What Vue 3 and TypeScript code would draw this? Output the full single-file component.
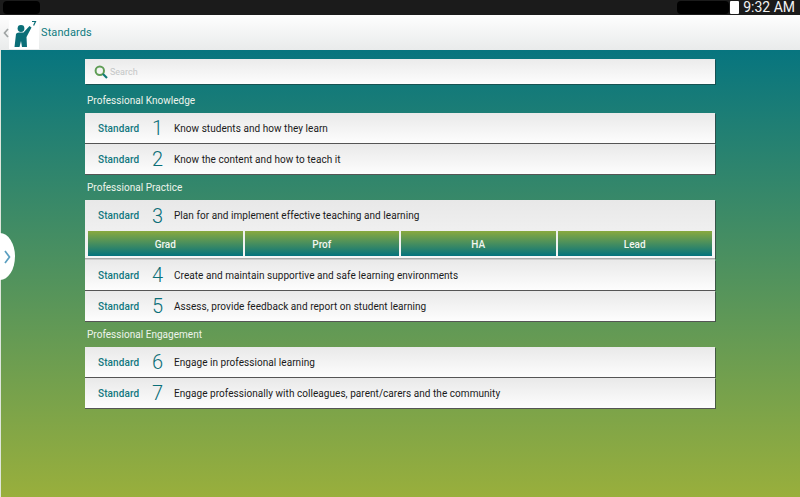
<script setup lang="ts">
interface Row { n: number; text: string; levels?: string[] }
interface Group { title: string; rows: Row[] }
const groups: Group[] = [
  { title: 'Professional Knowledge', rows: [
    { n: 1, text: 'Know students and how they learn' },
    { n: 2, text: 'Know the content and how to teach it' },
  ] },
  { title: 'Professional Practice', rows: [
    { n: 3, text: 'Plan for and implement effective teaching and learning', levels: ['Grad', 'Prof', 'HA', 'Lead'] },
    { n: 4, text: 'Create and maintain supportive and safe learning environments' },
    { n: 5, text: 'Assess, provide feedback and report on student learning' },
  ] },
  { title: 'Professional Engagement', rows: [
    { n: 6, text: 'Engage in professional learning' },
    { n: 7, text: 'Engage professionally with colleagues, parent/carers and the community' },
  ] },
]
</script>

<template>
  <div class="screen">
    <div class="status">
      <span class="blot left"></span>
      <span class="spacer"></span>
      <span class="blot right"></span>
      <span class="battery"></span>
      <span class="clock">9:32 AM</span>
    </div>
    <header class="bar">
      <svg class="back" width="6" height="10" viewBox="0 0 6 10"><path d="M5 1 L1.5 5 L5 9" fill="none" stroke="#a0a5a5" stroke-width="1.7"/></svg>
      <div class="logo">
        <svg width="30" height="29" viewBox="0 1 30 29">
          <circle cx="12" cy="9.5" r="3.4" fill="#0b6f78"/>
          <path d="M5.5 28 L7 15 Q7.5 13.5 10 13.5 L14.5 13.5 L20.5 7 L22.5 8.5 L17.5 18 L18 28 L13 28 L12 22 L10.5 28 Z" fill="#0b6f78"/>
          <path d="M23 2.5 H26.5 L24.6 6.5" fill="none" stroke="#0b6f78" stroke-width="1.2"/>
        </svg>
      </div>
      <span class="title">Standards</span>
    </header>
    <main class="body">
      <button class="tab" type="button">
        <svg width="7" height="14" viewBox="0 0 7 14"><path d="M1 1 L5.5 7 L1 13" fill="none" stroke="#5b9fc0" stroke-width="1.7"/></svg>
      </button>
      <div class="column">
        <div class="search">
          <svg width="14" height="14" viewBox="0 0 14 14">
            <circle cx="5.8" cy="5.8" r="4.2" fill="none" stroke="#5f9d55" stroke-width="2"/>
            <path d="M9 9 L13 13" stroke="#0f7a78" stroke-width="2.2"/>
          </svg>
          <span>Search</span>
        </div>
        <section v-for="g in groups" :key="g.title" class="group">
          <h2>{{ g.title }}</h2>
          <div class="list">
            <div v-for="r in g.rows" :key="r.n" class="card" :class="{ open: r.levels }">
              <div class="row">
                <span class="std">Standard</span>
                <span class="num">{{ r.n }}</span>
                <span class="text">{{ r.text }}</span>
              </div>
              <div v-if="r.levels" class="levels">
                <span v-for="l in r.levels" :key="l">{{ l }}</span>
              </div>
            </div>
          </div>
        </section>
      </div>
    </main>
  </div>
</template>

<style>
html, body { margin: 0; padding: 0; background: #fff; }
</style>

<style scoped>
.screen { width: 800px; height: 497px; display: flex; flex-direction: column; overflow: hidden; font-family: Roboto, "Liberation Sans", sans-serif; }
.status { height: 15px; background: #1b1b1b; display: flex; align-items: center; color: #f2f2f2; flex: none; }
.blot { background: #000; height: 13px; border-radius: 4px; }
.blot.left { width: 37px; margin-left: 3px; }
.blot.right { width: 52px; }
.spacer { flex: 1; }
.battery { width: 9px; height: 13px; background: #fff; margin-left: 1px; border-radius: 1px; }
.clock { font-size: 14px; margin: 0 5px 0 4px; line-height: 15px; }
.bar { height: 35px; flex: none; display: flex; align-items: center; background: linear-gradient(#fefefe, #e9ebeb); box-sizing: border-box; }
.back { margin-left: 3px; }
.logo { width: 30px; height: 29px; background: #fff; margin-top: 3px; line-height: 0; }
.title { color: #0f7b80; font-size: 11px; margin-left: 2px; letter-spacing: .1px; }
.body { flex: 1; position: relative; background: linear-gradient(#07757f, #99af3c); border-left: 1px solid #dfe6dc; display: flex; justify-content: center; }
.column { width: 630px; margin-left: -1px; padding-top: 9px; }
.tab { position: absolute; left: -1px; top: 183px; width: 15px; height: 47px; padding: 0; border: 0; background: #fff; border-radius: 0 100% 100% 0 / 0 50% 50% 0; display: flex; align-items: center; justify-content: center; }
.search { height: 25px; box-sizing: border-box; display: flex; align-items: center; gap: 2px; padding-left: 9px; background: linear-gradient(#ebebeb, #fdfdfd); box-shadow: 1px 1px 0 rgba(30, 50, 50, .55); font-size: 9px; color: #c4c6c6; }
.group h2 { margin: 0; font-size: 10px; font-weight: 400; color: #eef4ec; height: 25px; box-sizing: border-box; line-height: 13px; padding: 6px 0 0 2px; letter-spacing: .03px; }
.search + .group h2 { height: 29px; padding-top: 10px; }
.list { display: flex; flex-direction: column; }
.card { background: linear-gradient(#e9e9e9, #fdfdfd); box-shadow: 0 1px 0 #555, 1px 1px 0 rgba(50, 60, 60, .7); margin-bottom: 1px; }
.card.open { background: linear-gradient(#e8e8e8, #f6f6f6); margin-bottom: 2px; box-shadow: 0 1px 0 #aaa, 0 2px 0 #ccc, 1px 1px 0 rgba(50, 60, 60, .7); }
.row { height: 30px; display: flex; align-items: center; padding-left: 13px; font-size: 10px; }
.open .row { height: 31px; }
.std { width: 54px; color: #12777f; font-weight: 500; font-size: 10px; letter-spacing: .1px; }
.num { width: 22px; color: #0b6f78; font-size: 20px; font-weight: 300; }
.text { color: #1a1a1a; letter-spacing: .05px; }
.levels { display: grid; grid-template-columns: repeat(4, 1fr); gap: 2px; padding: 0 3px 2px; }
.levels span { height: 25px; box-sizing: border-box; padding-top: 1px; background: linear-gradient(#89a93f, #05737d); color: #f2f6f0; font-size: 10px; font-weight: 500; display: flex; align-items: center; justify-content: center; }
</style>
